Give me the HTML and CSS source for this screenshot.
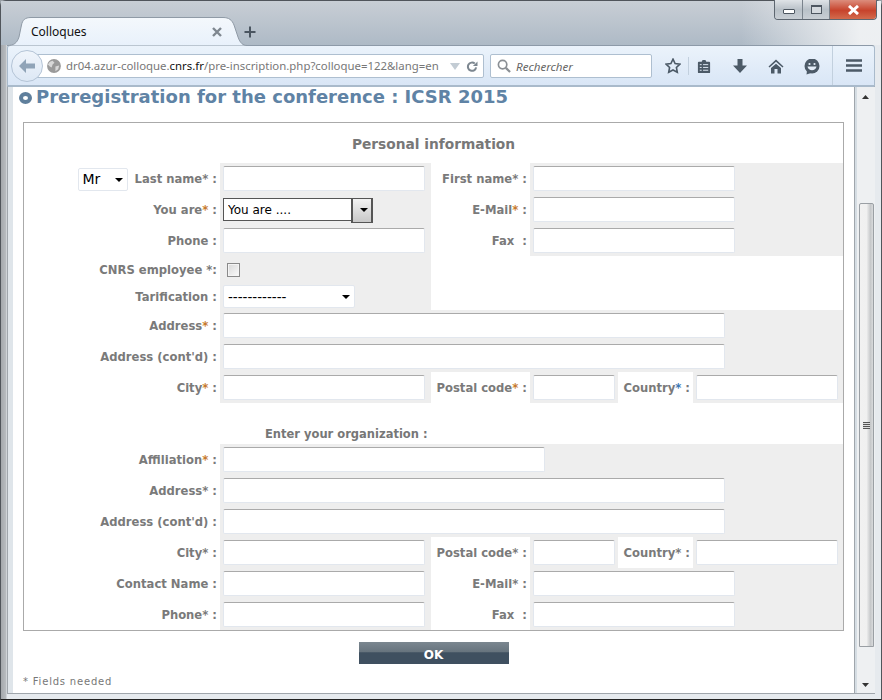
FILE: index.html
```html
<!DOCTYPE html>
<html lang="en">
<head>
<meta charset="utf-8">
<title>Colloques</title>
<link rel="stylesheet" href="styles.css">
</head>
<body>
<div class="window">
  <header class="titlebar">
    <div class="tab">
      <svg class="tab-shape" width="240" height="29" viewBox="0 0 240 29"><path d="M0 28.500C7 28.500 10 26 12 20L14.500 8C15.500 3 18 .5 24 .5H216C222 .5 225 3 227 8L231 20C233 26 236 28.500 240 28.500V29H0Z" fill="url(#tabfill)" stroke="#8f9aa6"/><defs><linearGradient id="tabfill" x1="0" y1="0" x2="0" y2="1"><stop offset="0" stop-color="#f4f8fc"/><stop offset="1" stop-color="#e8f1fb"/></linearGradient></defs></svg>
      <span class="tab-title">Colloques</span>
      <svg class="tab-close" width="10" height="10" viewBox="0 0 10 10"><path d="M1 1l8 8M9 1l-8 8" stroke="#7f8790" stroke-width="2.400"/></svg>
    </div>
    <svg class="tab-new" width="12" height="12" viewBox="0 0 12 12"><path d="M6 0.5v11M0.5 6h11" stroke="#4a5560" stroke-width="2"/></svg>
    <div class="controls">
      <div class="ctl ctl-min"><span class="min-glyph"></span></div>
      <div class="ctl ctl-max"><span class="max-glyph"></span></div>
      <div class="ctl ctl-close"><svg width="13" height="10" viewBox="0 0 13 10"><path d="M2 1l9 8M11 1l-9 8" stroke="#fff" stroke-width="3"/></svg></div>
    </div>
  </header>
  <nav class="toolbar">
    <div class="urlbar">
      <svg class="globe" width="14" height="14" viewBox="0 0 15 15"><circle cx="7.5" cy="7.5" r="7.400" fill="#9a9a9a"/><path d="M3 3l3-1 2 2-2 2-1 3-2-1-2-2zM9 8l4-1-1 4-3 2z" fill="#d8d8d8"/></svg>
      <span class="url"><span>dr04.azur-colloque.</span><b>cnrs.fr</b><span>/pre-inscription.php?colloque=122&amp;lang=en</span></span>
      <svg class="url-drop" width="10" height="7" viewBox="0 0 10 7"><path d="M0 0h10L5 7z" fill="#c3ccd4"/></svg>
      <svg class="reload" width="12" height="11" viewBox="0 0 13 12"><path d="M11 7A4.500 4.500 0 1 1 9.500 2.800" fill="none" stroke="#7d8790" stroke-width="2.200"/><path d="M7.500 5.500h5v-5z" fill="#7d8790"/></svg>
    </div>
    <div class="back"><svg width="18" height="16" viewBox="0 0 18 16"><path d="M8 1L1 8l7 7V10.500h9v-5H8z" fill="#90a4b8"/></svg></div>
    <div class="search">
      <svg width="14" height="14" viewBox="0 0 15 15"><circle cx="6" cy="6" r="4.500" fill="none" stroke="#8a8f94" stroke-width="1.800"/><path d="M9.500 9.500l4.500 4.500" stroke="#8a8f94" stroke-width="2.400"/></svg>
      <span>Rechercher</span>
    </div>
    <svg class="tool t-star" width="16" height="16" viewBox="0 0 16 16"><path d="M8 1.200l2.100 4.400 4.800.6-3.500 3.300.9 4.800L8 12l-4.300 2.300.9-4.800L1.100 6.200l4.800-.6z" fill="none" stroke="#4c5a67" stroke-width="1.600"/></svg>
    <span class="sep sep-a"></span>
    <svg class="tool t-list" width="14" height="15" viewBox="0 0 14 16"><path d="M1.500 3h3l1-2h3l1 2h3a1 1 0 0 1 1 1v10a1 1 0 0 1-1 1h-11a1 1 0 0 1-1-1V4a1 1 0 0 1 1-1z" fill="#4c5a67"/><path d="M2.500 6h2M6 6h5.500M2.500 9h2M6 9h5.500M2.500 12h2M6 12h5.500" stroke="#e3edf8" stroke-width="1"/></svg>
    <svg class="tool t-down" width="14" height="14" viewBox="0 0 14 14"><path d="M4.500 0h5v6.500H14L7 14 0 6.500h4.500z" fill="#4c5a67"/></svg>
    <svg class="tool t-home" width="16" height="15" viewBox="0 0 16 15"><path d="M8 0.500L0.500 7.500l1 1L8 2.800l6.500 5.700 1-1z" fill="#4c5a67"/><path d="M3 9l5-4.300L13 9v5.500H9.500V10h-3v4.500H3z" fill="#4c5a67"/></svg>
    <svg class="tool t-smile" width="16" height="16" viewBox="0 0 16 16"><circle cx="8" cy="7" r="7.500" fill="#4c5a67"/><path d="M3 12l-.5 3.500L7 14z" fill="#4c5a67"/><circle cx="5.500" cy="5" r="1.100" fill="#e3edf8"/><circle cx="10.500" cy="5" r="1.100" fill="#e3edf8"/><path d="M3.500 7.500h9c-.5 2.500-2.300 3.800-4.500 3.800s-4-1.300-4.500-3.800z" fill="#e3edf8"/></svg>
    <span class="sep sep-b"></span>
    <svg class="tool t-menu" width="16" height="13" viewBox="0 0 16 13"><path d="M0 1.500h16M0 6.500h16M0 11.500h16" stroke="#4c5a67" stroke-width="2.600"/></svg>
  </nav>
  <div class="viewport">
    <main class="page">
      <h1 class="heading"><span class="bullet"></span>Preregistration for the conference : ICSR 2015</h1>
      <form class="formbox">
        <div class="grid">
          <h2 class="section-title">Personal information</h2>

          <div class="label label-title"><span class="sel sel-mr"><select><option>Mr</option></select></span><span>Last name<i class="req">*</i> :</span></div>
          <div class="field"><input class="w-m" type="text"></div>
          <div class="label">First name<i class="req">*</i> :</div>
          <div class="field span-3"><input class="w-m" type="text"></div>

          <div class="label">You are<i class="req red">*</i> :</div>
          <div class="field"><span class="sel sel-you"><select><option>You are ....</option></select></span></div>
          <div class="label">E-Mail<i class="req red">*</i> :</div>
          <div class="field span-3"><input class="w-m" type="text"></div>

          <div class="label">Phone :</div>
          <div class="field"><input class="w-m" type="text"></div>
          <div class="label">Fax &nbsp;:</div>
          <div class="field span-3"><input class="w-m" type="text"></div>

          <div class="label label-s">CNRS employee *:</div>
          <div class="field"><span class="check"></span></div>
          <div class="blank"></div>

          <div class="label label-s">Tarification :</div>
          <div class="field"><span class="sel sel-tarif"><select><option>------------</option></select></span></div>
          <div class="blank"></div>

          <div class="label">Address<i class="req red">*</i> :</div>
          <div class="field span-5"><input class="w-l" type="text"></div>

          <div class="label">Address (cont'd) :</div>
          <div class="field span-5"><input class="w-l" type="text"></div>

          <div class="label">City<i class="req red">*</i> :</div>
          <div class="field"><input class="w-m" type="text"></div>
          <div class="label">Postal code<i class="req red">*</i> :</div>
          <div class="field"><input class="w-s" type="text"></div>
          <div class="label">Country<i class="req blue">*</i> :</div>
          <div class="field"><input class="w-c" type="text"></div>

          <div class="org-title">Enter your organization :</div>

          <div class="label">Affiliation<i class="req red">*</i> :</div>
          <div class="field span-5"><input class="w-a" type="text"></div>

          <div class="label">Address<i class="req">*</i> :</div>
          <div class="field span-5"><input class="w-l" type="text"></div>

          <div class="label">Address (cont'd) :</div>
          <div class="field span-5"><input class="w-l" type="text"></div>

          <div class="label">City<i class="req">*</i> :</div>
          <div class="field"><input class="w-m" type="text"></div>
          <div class="label">Postal code<i class="req">*</i> :</div>
          <div class="field"><input class="w-s" type="text"></div>
          <div class="label">Country<i class="req">*</i> :</div>
          <div class="field"><input class="w-c" type="text"></div>

          <div class="label">Contact Name :</div>
          <div class="field"><input class="w-m" type="text"></div>
          <div class="label">E-Mail<i class="req">*</i> :</div>
          <div class="field span-3"><input class="w-m" type="text"></div>

          <div class="label">Phone<i class="req">*</i> :</div>
          <div class="field"><input class="w-m" type="text"></div>
          <div class="label">Fax &nbsp;:</div>
          <div class="field span-3"><input class="w-m" type="text"></div>
        </div>
      </form>
      <div class="actions"><button class="ok" type="button">OK</button></div>
      <p class="needed">* Fields needed</p>
    </main>
    <aside class="scrollbar">
      <svg class="arrow" width="7" height="4" viewBox="0 0 7 4"><path d="M3.500 0L7 4H0z" fill="#333"/></svg>
      <div class="track">
        <div class="thumb"><span class="grip"></span></div>
      </div>
      <svg class="arrow" width="7" height="4" viewBox="0 0 7 4"><path d="M0 0h7L3.500 4z" fill="#333"/></svg>
    </aside>
  </div>
</div>
</body>
</html>
```
FILE: styles.css
```css
* { box-sizing: border-box; }
html, body { margin: 0; height: 100%; }
body { width: 882px; height: 700px; overflow: hidden; background: #9aa0a6; font-family: "DejaVu Sans", sans-serif; }
.window { position: relative; width: 882px; height: 700px; display: flex; flex-direction: column; padding: 0 6px 5px 6px; border: 1px solid #50555b; border-bottom-color: #222; border-radius: 6px 6px 0 0; background: linear-gradient(90deg, #a4a8ac 0, #b8bcc0 5px, #e6eaee 6px, #e6eaee 100%); }

/* title bar */
.titlebar { position: relative; height: 44px; flex: none; margin: 0 -6px; background: linear-gradient(180deg, #c8ced5 0, #aebac6 100%); }
.titlebar::after { content: ""; position: absolute; right: 0; top: 0; bottom: 0; width: 140px; background: linear-gradient(90deg, rgba(240,242,244,0), rgba(240,242,244,.95) 85%); }
.tab { position: absolute; left: 6px; top: 16px; width: 240px; height: 29px; padding: 0 25px 0 24px; display: flex; align-items: center; justify-content: space-between; z-index: 1; }
.tab-shape { position: absolute; left: 0; top: 0; }
.tab-title { position: relative; font: 12px "Noto Sans", sans-serif; color: #111; }
.tab-close { position: relative; }
.tab-new { position: absolute; left: 243px; top: 25px; }
.controls { position: absolute; right: 4px; top: -1px; width: 103px; height: 20px; display: flex; border: 1px solid #5d6670; border-top: 0; border-radius: 0 0 4px 4px; overflow: hidden; z-index: 2; }
.ctl { height: 100%; display: flex; align-items: center; justify-content: center; background: linear-gradient(180deg, #dfe3e7, #b9c1c8 50%, #c8ced4); }
.ctl-min { width: 28px; border-right: 1px solid #7a838c; }
.ctl-max { width: 27px; border-right: 1px solid #7a838c; }
.ctl-close { flex: 1; background: linear-gradient(180deg, #dc8d7c, #c7432c 55%, #d36b4d); }
.min-glyph { width: 12px; height: 5px; margin-top: 4px; background: #fff; border: 1px solid #4d5660; border-radius: 1px; }
.max-glyph { width: 11px; height: 9px; background: #d4d9de; border: 1px solid #4d5660; border-top-width: 2px; }

/* toolbar */
.toolbar { position: relative; height: 41px; flex: none; background: linear-gradient(180deg, #ebf3fb, #d9e6f6); border: 1px solid #a9bacb; border-top-color: #8d9aa8; border-radius: 3px 3px 0 0; }
.toolbar .back { position: absolute; left: 3px; top: 4px; width: 32px; height: 32px; border-radius: 50%; border: 1px solid #b4c4d6; background: linear-gradient(180deg, #f0f5fb, #dde8f5); display: flex; align-items: center; justify-content: center; }
.urlbar { position: absolute; left: 20px; top: 8px; width: 456px; height: 24px; background: #fff; border: 1px solid #aebfd0; border-radius: 2px; }
.globe { position: absolute; left: 18px; top: 4px; }
.url { position: absolute; left: 37px; top: 3px; font: 11.400px/16px "Noto Sans", sans-serif; color: #777; white-space: nowrap; }
.url b { font-weight: normal; color: #111; }
.url-drop { position: absolute; left: 421px; top: 8px; }
.reload { position: absolute; left: 437px; top: 6px; }
.search { position: absolute; left: 482px; top: 8px; width: 162px; height: 24px; display: flex; align-items: center; gap: 5px; padding-left: 6px; background: #fff; border: 1px solid #aebfd0; border-radius: 2px; font: italic 11.600px "Noto Sans", sans-serif; color: #666; }
.tool { position: absolute; }
.t-star { left: 657px; top: 12px; }
.t-list { left: 689px; top: 13px; }
.t-down { left: 725px; top: 13px; }
.t-home { left: 760px; top: 13px; }
.t-smile { left: 796px; top: 13px; }
.t-menu { left: 838px; top: 13px; }
.sep { position: absolute; width: 1px; background: #c2d0de; }
.sep-a { left: 680px; top: 11px; height: 18px; }
.sep-b { left: 824px; top: 0; height: 39px; }

/* viewport */
.viewport { flex: 1; min-height: 0; display: flex; background: #dfe5ea; border: 1px solid #a0a6ac; border-top: 1px solid #a9bacb; padding-left: 5px; }
.page { width: 841px; flex: none; background: #fff; padding: 0 0 0 10px; overflow: hidden; color: #777; }
.heading { margin: 0 0 0 -4px; height: 35px; display: flex; align-items: flex-start; gap: 4px; font: bold 18px/20px "DejaVu Sans", sans-serif; color: #5f83a5; white-space: nowrap; }
.bullet { width: 13px; height: 12px; margin-top: 5px; border: 4px solid #5f7f9c; border-radius: 50%; background: #fff; }

.formbox { width: 821px; border: 1px solid #aaa; background: #fff; }
.grid { display: grid; grid-template-columns: 196px 211px 99px 88px 75px 150px; grid-template-rows: 40px repeat(3, 31px) 27px 27px repeat(3, 31px) 41px repeat(6, 31px); }
.section-title { grid-column: 1 / -1; margin: 0; text-align: center; font: bold 13.750px/42px "DejaVu Sans", sans-serif; color: #777; }
.label { display: flex; align-items: center; justify-content: flex-end; padding: 1px 3px 0 0; font: bold 11.600px "DejaVu Sans", sans-serif; color: #7a7a7a; white-space: pre; }
.label-s { padding-top: 0; }
.field { background: #eee; padding-left: 3px; display: flex; align-items: center; }
.span-3 { grid-column: span 3; }
.span-5 { grid-column: span 5; }
.blank { grid-column: span 4; }
.org-title { grid-column: 1 / -1; padding: 24px 0 0 241px; font: bold 11.500px/14px "DejaVu Sans", sans-serif; color: #777; }
.req { font-style: normal; color: #7a7a7a; }
.req.red { color: #c77a2e; }
.req.blue { color: #3a78b5; }

input { height: 25px; padding: 0 4px; background: #fff; border: 1px solid #e2e7ee; border-top-color: #aaa; border-radius: 2px; font: 12px "DejaVu Sans", sans-serif; }
.w-m { width: 202px; }
.w-l { width: 502px; }
.w-a { width: 322px; }
.w-s { width: 82px; }
.w-c { width: 142px; }

.sel { position: relative; display: inline-block; }
.sel select { display: block; width: 100%; height: 100%; padding: 0 0 0 4px; appearance: none; background: #fff; border: 1px solid #e2e7ee; border-radius: 2px; color: #000; font: 14px "DejaVu Sans", sans-serif; }
.sel::after { content: ""; position: absolute; right: 5px; top: 10px; border: 4px solid transparent; border-top-color: #000; border-bottom: 0; }
.sel-mr { width: 50px; height: 23px; margin-right: 7px; }
.sel-you { width: 150px; height: 23px; }
.sel-you select { border: 1px solid #555; border-radius: 0; font-size: 12px; }
.sel-you::before { content: ""; position: absolute; right: 0; top: 0; width: 18px; height: 23px; border: 1px solid #555; border-left-width: 2px; border-right-width: 2px; background: linear-gradient(180deg, #f2f2f2, #c8c8c8); z-index: 1; }
.sel-you::after { z-index: 2; right: 5px; }
.sel-tarif { width: 132px; height: 23px; }
.sel-tarif select { font-size: 13.500px; }
.check { display: block; width: 13px; height: 14px; margin-left: 4px; border: 1px solid #8a8a8a; background: linear-gradient(135deg, #d8d8d8, #fafafa); box-shadow: inset 0 0 0 1px #f4f4f4; }

.actions { display: flex; justify-content: center; padding-top: 11px; width: 821px; }
.ok { width: 150px; height: 22px; padding: 4px 0 0; border: 0; font: bold 12px/14px "DejaVu Sans", sans-serif; color: #fff; background: linear-gradient(180deg, #7b8790 0, #66737d 47%, #3f5060 48%, #3f5060 100%); }
.needed { margin: 11px 0 0; font: 10px/14px "DejaVu Sans", sans-serif; color: #777; letter-spacing: .8px; }

/* scrollbar */
.scrollbar { flex: 1; display: flex; flex-direction: column; align-items: center; background: #eef0f2; border-left: 1px solid #a0a6ac; box-shadow: inset 2px 0 0 #d5dde3; padding: 8px 0 6px; }
.arrow { flex: none; }
.track { flex: 1; width: 100%; padding: 104px 1px 36px 4px; }
.thumb { height: 100%; width: 15px; border: 1px solid #9a9fa4; border-radius: 2px 2px 0 0; background: linear-gradient(90deg, #f1f1f1, #f0f0f0 50%, #c6c8ca 80%, #d8dadc); display: flex; align-items: center; justify-content: center; }
.grip { width: 7px; height: 7px; background: repeating-linear-gradient(180deg, #555 0 1px, #ddd 1px 2px); }
```
